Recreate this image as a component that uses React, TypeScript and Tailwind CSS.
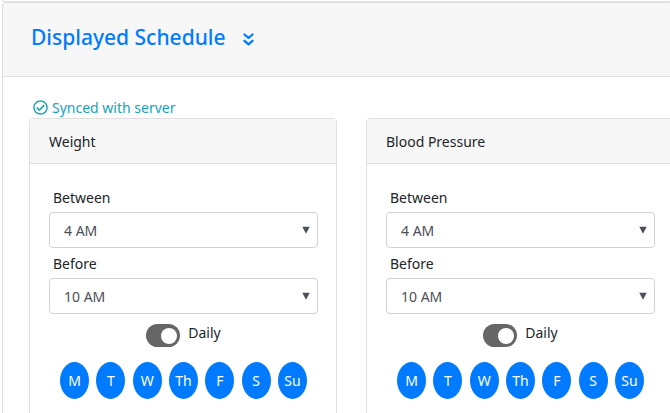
import React, { useState } from 'react';
import { FaRegCheckCircle } from 'react-icons/fa';

const DAYS = ['M', 'T', 'W', 'Th', 'F', 'S', 'Su'];

const HOURS = Array.from({ length: 24 }, (_, h) => `${h % 12 === 0 ? 12 : h % 12} ${h < 12 ? 'AM' : 'PM'}`);

const SCHEDULES = [
  { id: 'weight', title: 'Weight', between: '4 AM', before: '10 AM' },
  { id: 'bp', title: 'Blood Pressure', between: '4 AM', before: '10 AM' }
];

interface TimeSelectProps {
  id: string;
  label: string;
  initial: string;
}

const TimeSelect: React.FC<TimeSelectProps> = ({ id, label, initial }) => {
  const [value, setValue] = useState(initial);

  return (
    <div>
      <label htmlFor={id} className="block h-[30px] px-1 leading-8">{label}</label>
      <div className="relative">
        <select
          id={id}
          className="block w-full h-9 appearance-none rounded border border-[#ced4da] bg-white pl-3.5 pr-6 text-[#495057]"
          value={value}
          onChange={(e) => setValue(e.target.value)}
        >
          {HOURS.map(hour => <option key={hour}>{hour}</option>)}
        </select>
        <svg className="pointer-events-none absolute right-2 top-3.5 h-2 w-2 fill-[#495057]" viewBox="0 0 8 8">
          <path d="M0.3 0.8h7.4L4 7.8z" />
        </svg>
      </div>
    </div>
  );
};

const ScheduleCard: React.FC<{ schedule: typeof SCHEDULES[number] }> = ({ schedule }) => {
  const [daily, setDaily] = useState(true);
  const [days, setDays] = useState<string[]>(DAYS);

  const toggleDay = (day: string) => {
    const updated = days.includes(day) ? days.filter(d => d !== day) : [...days, day];
    setDays(updated);
    setDaily(updated.length === DAYS.length);
  };

  const handleDaily = () => {
    setDays(daily ? [] : DAYS);
    setDaily(!daily);
  };

  return (
    <section className="w-[308px] shrink-0 rounded border border-[#dfdfdf] bg-white">
      <h3 className="border-b border-[#dfdfdf] bg-[#f7f7f7] px-[19px] pb-[9px] pt-[11px] leading-6">{schedule.title}</h3>
      <div className="pb-5 pl-[19px] pr-[18px] pt-[18px]">
        <TimeSelect id={`${schedule.id}-between`} label="Between" initial={schedule.between} />
        <TimeSelect id={`${schedule.id}-before`} label="Before" initial={schedule.before} />

        <div className="mt-2.5 flex justify-center gap-2">
          <input
            id={`${schedule.id}-daily`}
            type="checkbox"
            role="switch"
            checked={daily}
            onChange={handleDaily}
            className="h-[23px] w-[34px] appearance-none rounded-full bg-[#666] p-1 before:block before:h-4 before:w-4 before:rounded-full before:bg-white checked:before:ml-[11px]"
          />
          <label htmlFor={`${schedule.id}-daily`} className="leading-[18px]">Daily</label>
        </div>

        <div className="mx-auto mt-[15px] flex w-[247px] justify-between">
          {DAYS.map((day) => (
            <button
              key={day}
              type="button"
              onClick={() => toggleDay(day)}
              className={`h-[37px] w-[29px] rounded-[50%] text-center ${
                days.includes(day) ? 'bg-[#007bff] text-white' : 'bg-gray-200 text-[#212529]'
              }`}
            >
              {day}
            </button>
          ))}
        </div>
      </div>
    </section>
  );
};

export default function App() {
  const [open, setOpen] = useState(true);

  return (
    <main className="overflow-hidden bg-white pl-0.5 font-['Noto_Sans',sans-serif] text-[14px] text-[#212529]">
      {/* bottom edge of the collapsed card above */}
      <div className="h-0.5 rounded-b border-b border-l border-[#dfdfdf]" />
      <div className="rounded-tl border-l border-t border-[#dfdfdf]">
        <header className="rounded-tl border-b border-[#dfdfdf] bg-[#f7f7f7] px-7 pb-[22px] pt-[18px]">
          <h2>
            <button
              type="button"
              onClick={() => setOpen(!open)}
              className="flex items-center gap-4 text-[21px] font-medium leading-[33px] text-[#007bff]"
            >
              Displayed Schedule
              <svg className="mt-1 h-[13px] w-[13px]" viewBox="0 0 13 13" fill="none" stroke="currentColor" strokeWidth="2.3" strokeLinecap="round" strokeLinejoin="round">
                <path d="M2.5 1.5l4 3.5 4-3.5M2.5 7.8l4 3.5 4-3.5" />
              </svg>
            </button>
          </h2>
        </header>

        {open && (
          <div className="px-[26px] pt-5">
            <p className="flex items-center gap-1 px-1 leading-[21px] text-[#17a2b8]">
              <FaRegCheckCircle className="h-[15px] w-[15px]" />
              Synced with server
            </p>
            <div className="flex gap-[29px]">
              {SCHEDULES.map(schedule => <ScheduleCard key={schedule.id} schedule={schedule} />)}
            </div>
          </div>
        )}
      </div>
    </main>
  );
}
